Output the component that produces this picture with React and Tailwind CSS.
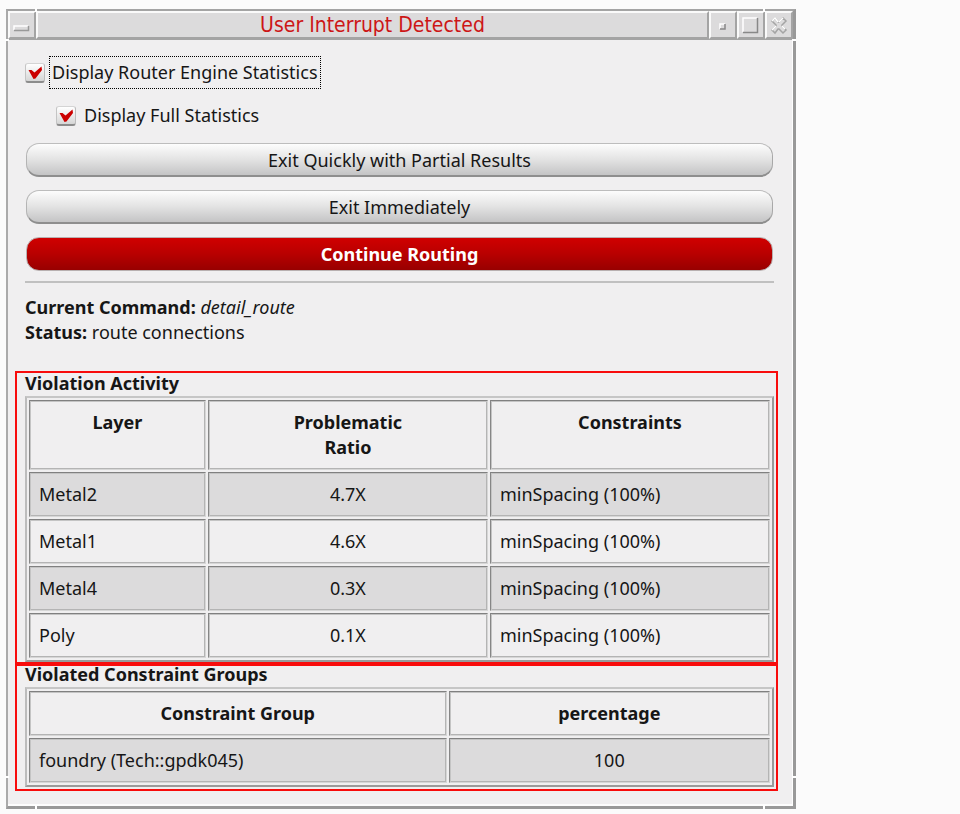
import React, { useState } from "react";

const violations = [
  ["Metal2", "4.7X", "minSpacing (100%)"],
  ["Metal1", "4.6X", "minSpacing (100%)"],
  ["Metal4", "0.3X", "minSpacing (100%)"],
  ["Poly", "0.1X", "minSpacing (100%)"],
];

const cell =
  "border border-t-[#808080] border-l-[#868686] border-r-[#d6d6d6] border-b-[#d6d6d6] px-[9px] py-[9px] align-top shadow-[inset_1px_1px_0_#c4c4c4,inset_-1px_-1px_0_#b4b4b4]";
const tableClass =
  "w-full table-fixed border-separate border-spacing-[2px] border-2 border-t-[#c6c6c6] border-l-[#bcbcbc] border-r-[#9a9a9a] border-b-[#9a9a9a]";

function CheckBox({ id }) {
  const [on, setOn] = useState(true);
  return (
    <span className="relative h-5 w-5 shrink-0">
      <input
        id={id}
        type="checkbox"
        checked={on}
        onChange={() => setOn(!on)}
        className="block h-5 w-5 appearance-none rounded-[3px] border border-t-[#d4d4d4] border-r-[#bcbcbc] border-b-2 border-l-[#c4c4c4] border-b-[#8c8c8c] bg-linear-to-b from-white to-[#d6d6d6]"
      />
      {on && (
        <svg viewBox="0 0 20 20" className="pointer-events-none absolute inset-0 h-5 w-5">
          <path d="M3.5 7 L6.5 7 L9.5 9.5 L16.5 3.5 L17 7 L10.5 15.5 L8.5 16 Z" fill="#cb0000" />
        </svg>
      )}
    </span>
  );
}

function TitleButton({ label, children }) {
  return (
    <button
      type="button"
      aria-label={label}
      className="h-7 w-7 shrink-0 border-2 border-t-[#fafafa] border-r-[#a4a4a4] border-b-[#a4a4a4] border-l-[#fafafa] bg-[#dcdbdc]"
    >
      <svg viewBox="0 0 24 24" className="h-6 w-6" fill="none">
        {children}
      </svg>
    </button>
  );
}

function PushButton({ primary, children }) {
  const look = primary
    ? "border-[#b8b0b0] bg-linear-to-b from-[#d00000] via-[#b80000] to-[#980000] font-bold text-white"
    : "border-t-[#bdbdbd] border-r-[#a8a8a8] border-b-2 border-l-[#b4b4b4] border-b-[#8e8e8e] bg-linear-to-b from-[#fdfdfd] via-[#e3e3e3] to-[#c4c4c5]";
  return (
    <button type="button" className={`h-[34px] w-full rounded-[13px] border leading-6 ${look}`}>
      {children}
    </button>
  );
}

function Section({ title, children }) {
  return (
    <section className="relative">
      <h2 className="font-bold">{title}</h2>
      {children}
      <div className="pointer-events-none absolute top-0 -right-1 -bottom-1 -left-2.5 z-10 border-2 border-[#f80c0c]" />
    </section>
  );
}

function FrameNotches() {
  return (
    <div aria-hidden="true" className="pointer-events-none absolute -inset-[3px]">
      <span className="absolute top-0 left-[30px] h-1 w-0.5 bg-white" />
      <span className="absolute top-0 right-[31px] h-1 w-0.5 bg-white" />
      <span className="absolute bottom-0 left-[30px] h-1 w-0.5 bg-white" />
      <span className="absolute right-[31px] bottom-0 h-1 w-0.5 bg-white" />
      <span className="absolute top-[31px] left-0 h-0.5 w-1 bg-white" />
      <span className="absolute top-[31px] right-0 h-0.5 w-1 bg-white" />
      <span className="absolute bottom-[31px] left-0 h-0.5 w-1 bg-white" />
      <span className="absolute right-0 bottom-[31px] h-0.5 w-1 bg-white" />
    </div>
  );
}

export default function App() {
  return (
    <div className="min-h-screen bg-[#fbfbfb] pt-[9px] pl-[6px] font-['Noto_Sans','Open_Sans',sans-serif] text-[18px] leading-[25px] text-[#161616]">
      <main className="relative w-full max-w-[790px] border-t-2 border-r-[3px] border-b-[3px] border-l-2 border-t-[#a4a4a4] border-r-[#999] border-b-[#999] border-l-[#aaa] bg-[#f0eff0] shadow-[inset_-1px_-2px_0_#fdfdfd]">
        <FrameNotches />
        <header className="flex border-b border-[#a4a4a4] bg-[#dcdbdc]">
          <TitleButton label="Window menu">
            <path d="M4 17V13H18" stroke="#fff" strokeWidth="1.5" />
            <path d="M4 17.5H18.5V13" stroke="#999" strokeWidth="1.5" />
          </TitleButton>
          <h1 className="flex-1 border-2 border-t-[#fafafa] border-r-[#a4a4a4] border-b-[#a4a4a4] border-l-[#fafafa] text-center font-['DejaVu_Sans_Condensed','DejaVu_Sans',sans-serif] text-[21px] leading-6 text-[#cd1616]">
            User Interrupt Detected
          </h1>
          <TitleButton label="Minimize">
            <path d="M9 16V11H14" stroke="#fff" strokeWidth="1.5" />
            <path d="M9 16H14V11" stroke="#888" strokeWidth="1.5" />
          </TitleButton>
          <TitleButton label="Maximize">
            <path d="M4 19V5H18" stroke="#fff" strokeWidth="1.5" />
            <path d="M4 19.5H18.5V5" stroke="#888" strokeWidth="1.5" />
          </TitleButton>
          <TitleButton label="Close">
            <path
              d="M5 8L8 5L11 9H12L16 5L19 8L15 12V13L19 17L16 20L12 16H11L8 20L5 17L9 13V12Z"
              stroke="#a4a4a4"
              strokeWidth="1.5"
            />
            <path d="M5 8L8 5L11 9M12 9L16 5M5 17L9 13M15 13L18 16" stroke="#fff" strokeWidth="1.5" />
          </TitleButton>
        </header>

        <div className="pt-4 pr-[19px] pb-[19px] pl-[17px]">
          <div className="flex items-center gap-1">
            <CheckBox id="engine" />
            <label htmlFor="engine" className="border border-dotted border-black px-0.5 py-[3px]">
              Display Router Engine Statistics
            </label>
          </div>
          <div className="mt-3.5 flex items-center gap-2 pl-[31px]">
            <CheckBox id="full" />
            <label htmlFor="full">Display Full Statistics</label>
          </div>

          <div className="mt-[15px] flex flex-col gap-[13px] px-px">
            <PushButton>Exit Quickly with Partial Results</PushButton>
            <PushButton>Exit Immediately</PushButton>
            <PushButton primary>Continue Routing</PushButton>
          </div>
          <hr className="mt-[10px] mb-3 border-t-2 border-[#c0c0c0]" />

          <p>
            <b>Current Command:</b> <i>detail_route</i>
          </p>
          <p className="mb-[26px]">
            <b>Status:</b> route connections
          </p>

          <Section title="Violation Activity">
            <table className={tableClass}>
              <colgroup>
                <col className="w-[24%]" />
                <col className="w-[38%]" />
                <col />
              </colgroup>
              <thead>
                <tr>
                  <th className={cell}>Layer</th>
                  <th className={cell}>
                    Problematic
                    <br />
                    Ratio
                  </th>
                  <th className={cell}>Constraints</th>
                </tr>
              </thead>
              <tbody>
                {violations.map(([layer, ratio, constraint]) => (
                  <tr key={layer} className="odd:bg-[#dcdbdc]">
                    <td className={cell}>{layer}</td>
                    <td className={`${cell} text-center`}>{ratio}</td>
                    <td className={cell}>{constraint}</td>
                  </tr>
                ))}
              </tbody>
            </table>
          </Section>

          <Section title="Violated Constraint Groups">
            <table className={tableClass}>
              <colgroup>
                <col className="w-[56.5%]" />
                <col />
              </colgroup>
              <thead>
                <tr>
                  <th className={cell}>Constraint Group</th>
                  <th className={cell}>percentage</th>
                </tr>
              </thead>
              <tbody>
                <tr className="bg-[#dcdbdc]">
                  <td className={cell}>foundry (Tech::gpdk045)</td>
                  <td className={`${cell} text-center`}>100</td>
                </tr>
              </tbody>
            </table>
          </Section>
        </div>
      </main>
    </div>
  );
}
